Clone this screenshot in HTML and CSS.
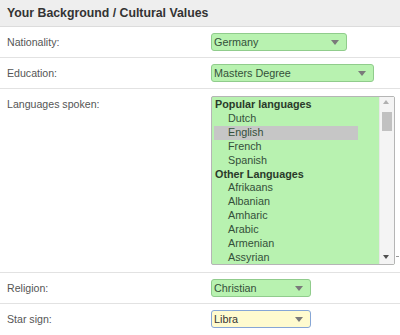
FILE: index.html
```html
<!DOCTYPE html>
<html>
<head>
<meta charset="utf-8">
<link rel="stylesheet" href="styles.css">
</head>
<body>
<div class="panel">
  <div class="head">Your Background / Cultural Values</div>
  <div class="row">
    <div class="label">Nationality:</div>
    <div class="sel green w136">Germany<span class="arrow"></span></div>
  </div>
  <div class="row">
    <div class="label">Education:</div>
    <div class="sel green w163">Masters Degree<span class="arrow"></span></div>
  </div>
  <div class="row row-list">
    <div class="label">Languages spoken:</div>
    <div class="listbox">
      <div class="items">
        <div class="grp">Popular languages</div>
        <div class="opt">Dutch</div>
        <div class="opt sel-opt">English</div>
        <div class="opt">French</div>
        <div class="opt">Spanish</div>
        <div class="grp">Other Languages</div>
        <div class="opt">Afrikaans</div>
        <div class="opt">Albanian</div>
        <div class="opt">Amharic</div>
        <div class="opt">Arabic</div>
        <div class="opt">Armenian</div>
        <div class="opt">Assyrian</div>
      </div>
      <div class="sbar">
        <span class="up"></span>
        <span class="thumb"></span>
        <span class="down"></span>
      </div>
      <span class="grip"></span>
    </div>
  </div>
  <div class="row">
    <div class="label">Religion:</div>
    <div class="sel green w100">Christian<span class="arrow"></span></div>
  </div>
  <div class="row last">
    <div class="label">Star sign:</div>
    <div class="sel yellow w100">Libra<span class="arrow"></span></div>
  </div>
</div>
</body>
</html>
```
FILE: styles.css
```css
html, body {
  margin: 0;
  padding: 0;
  background: #fff;
  font-family: "Liberation Sans", Arial, sans-serif;
}
.panel {
  width: 400px;
}
.head {
  height: 26px;
  line-height: 27px;
  background: #eeeeee;
  border-bottom: 1px solid #dcdcdc;
  padding-left: 7px;
  font-size: 12.3px;
  font-weight: bold;
  color: #333;
}
.row {
  display: flex;
  align-items: center;
  padding: 6px 0 6px 7px;
  border-bottom: 1px solid #e2e2e2;
}
.row.last {
  border-bottom: none;
}
.row-list {
  align-items: flex-start;
  padding-top: 7px;
  padding-bottom: 7px;
}
.label {
  width: 204px;
  flex: none;
  font-size: 10.6px;
  color: #555;
}
.row-list .label {
  padding-top: 2px;
}
.sel {
  position: relative;
  box-sizing: border-box;
  height: 18px;
  line-height: 16px;
  padding-left: 2px;
  border-radius: 3px;
  font-size: 10.8px;
  color: #34503a;
}
.green {
  background: #b8f2b0;
  border: 1px solid #90cc8c;
}
.yellow {
  background: #fffbcf;
  border: 1px solid #86a6d6;
  color: #333;
}
.w136 { width: 136px; }
.w163 { width: 163px; }
.w100 { width: 100px; }
.arrow {
  position: absolute;
  right: 7px;
  top: 6px;
  width: 0;
  height: 0;
  border-left: 4px solid transparent;
  border-right: 4px solid transparent;
  border-top: 5px solid #7a7a7a;
}
.listbox {
  position: relative;
  box-sizing: border-box;
  width: 184px;
  height: 169px;
  display: flex;
  border: 1px solid #b5b5b5;
  border-radius: 2px;
  background: #b8f2b0;
}
.items {
  flex: 1;
  padding-top: 1px;
  font-size: 10.8px;
  line-height: 13.9px;
  color: #34503a;
}
.grp {
  font-weight: bold;
  padding-left: 3px;
  color: #2a3a2a;
}
.opt {
  padding-left: 14px;
  width: 130px;
  margin-left: 2px;
}
.sel-opt {
  background: #c6c6c6;
}
.sbar {
  position: relative;
  width: 14px;
  flex: none;
  background: #f4f4f4;
  border-left: 1px solid #e8e8e8;
}
.up {
  position: absolute;
  left: 3px;
  top: 3px;
  width: 0;
  height: 0;
  border-left: 3.5px solid transparent;
  border-right: 3.5px solid transparent;
  border-bottom: 4px solid #b0b0b0;
}
.thumb {
  position: absolute;
  left: 2px;
  top: 15px;
  width: 10px;
  height: 19px;
  background: #c1c1c1;
}
.down {
  position: absolute;
  left: 3px;
  bottom: 5px;
  width: 0;
  height: 0;
  border-left: 3.5px solid transparent;
  border-right: 3.5px solid transparent;
  border-top: 4px solid #505050;
}
.grip {
  position: absolute;
  right: -5px;
  bottom: 7px;
  width: 3px;
  height: 1px;
  background: #999;
}
```
